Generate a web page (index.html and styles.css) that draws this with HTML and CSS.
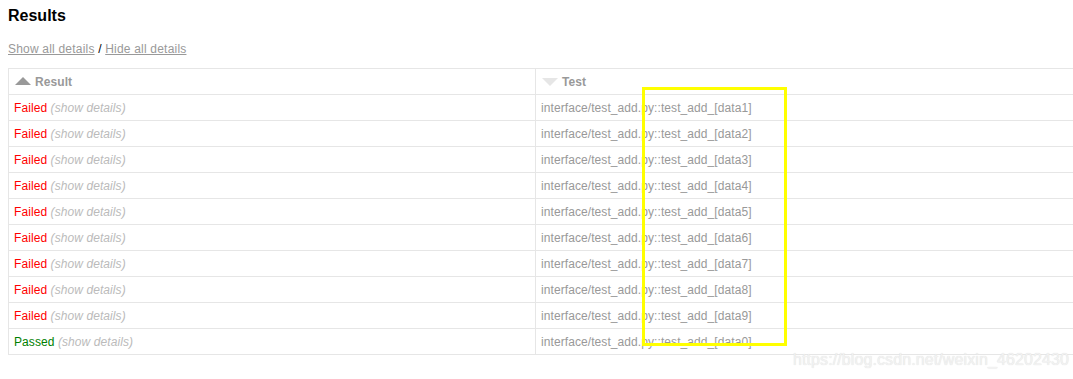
FILE: index.html
```html
<!DOCTYPE html>
<html>
<head>
<meta charset="utf-8">
<link rel="stylesheet" href="styles.css">
</head>
<body>
<h2 class="title">Results</h2>
<p class="links"><a href="#">Show all details</a> / <a href="#">Hide all details</a></p>
<table class="results">
  <thead>
    <tr>
      <th class="col-result"><span class="sort-icon asc"></span>Result</th>
      <th class="col-test"><span class="sort-icon inactive"></span>Test</th>
    </tr>
  </thead>
  <tbody>
    <tr><td><span class="failed">Failed</span> <span class="expander">(show details)</span></td><td>interface/test_add.py::test_add_[data1]</td></tr>
    <tr><td><span class="failed">Failed</span> <span class="expander">(show details)</span></td><td>interface/test_add.py::test_add_[data2]</td></tr>
    <tr><td><span class="failed">Failed</span> <span class="expander">(show details)</span></td><td>interface/test_add.py::test_add_[data3]</td></tr>
    <tr><td><span class="failed">Failed</span> <span class="expander">(show details)</span></td><td>interface/test_add.py::test_add_[data4]</td></tr>
    <tr><td><span class="failed">Failed</span> <span class="expander">(show details)</span></td><td>interface/test_add.py::test_add_[data5]</td></tr>
    <tr><td><span class="failed">Failed</span> <span class="expander">(show details)</span></td><td>interface/test_add.py::test_add_[data6]</td></tr>
    <tr><td><span class="failed">Failed</span> <span class="expander">(show details)</span></td><td>interface/test_add.py::test_add_[data7]</td></tr>
    <tr><td><span class="failed">Failed</span> <span class="expander">(show details)</span></td><td>interface/test_add.py::test_add_[data8]</td></tr>
    <tr><td><span class="failed">Failed</span> <span class="expander">(show details)</span></td><td>interface/test_add.py::test_add_[data9]</td></tr>
    <tr><td><span class="passed">Passed</span> <span class="expander">(show details)</span></td><td>interface/test_add.py::test_add_[data0]</td></tr>
  </tbody>
</table>
<div class="highlight"></div>
<div class="watermark">https://blog.csdn.net/weixin_46202430</div>
</body>
</html>
```
FILE: styles.css
```css
html, body {
  margin: 0;
  padding: 0;
  background: #fff;
  overflow: hidden;
}
body {
  position: relative;
  padding: 0 0 0 8px;
  font-family: "Liberation Sans", Arial, Helvetica, sans-serif;
  font-size: 12px;
  color: #999;
  height: 379px;
}
.title {
  margin: 6px 0 0;
  font-size: 16px;
  line-height: 20px;
  font-weight: bold;
  color: #000;
}
.links {
  margin: 16px 0 0;
  font-size: 12px;
  line-height: 14px;
  color: #000;
  letter-spacing: 0.2px;
}
.links a {
  color: #999;
  text-decoration: underline;
}
.results {
  margin-top: 12px;
  border-collapse: collapse;
  border: 1px solid #e6e6e6;
  border-right: none;
  width: 100%;
  letter-spacing: 0.08px;
}
.results th, .results td {
  border: 1px solid #e6e6e6;
  padding: 6px 5px 4px;
  text-align: left;
  line-height: 15px;
  vertical-align: middle;
}
.results th:last-child, .results td:last-child {
  border-right: none;
}
.results th {
  font-weight: bold;
  color: #999;
}
.col-result {
  width: 516px;
}
.sort-icon {
  display: inline-block;
  width: 0;
  height: 0;
  border-left: 8px solid transparent;
  border-right: 8px solid transparent;
  margin: 0 4px 0 1px;
  vertical-align: 1px;
}
.sort-icon.asc {
  border-bottom: 8px solid #999;
}
.sort-icon.inactive {
  border-top: 8px solid #e6e6e6;
  vertical-align: 0;
}
.failed {
  color: #f00;
}
.passed {
  color: #008000;
}
.expander {
  color: #bbb;
  font-style: italic;
}
.highlight {
  position: absolute;
  left: 642px;
  top: 87px;
  width: 139px;
  height: 253px;
  border: 3px solid #ffff00;
}
.watermark {
  position: absolute;
  left: 793px;
  top: 350px;
  font-size: 16px;
  line-height: 20px;
  color: #f2f2f2;
  text-shadow: 0 0 1px #d8d8d8;
  letter-spacing: 0.1px;
}
```
